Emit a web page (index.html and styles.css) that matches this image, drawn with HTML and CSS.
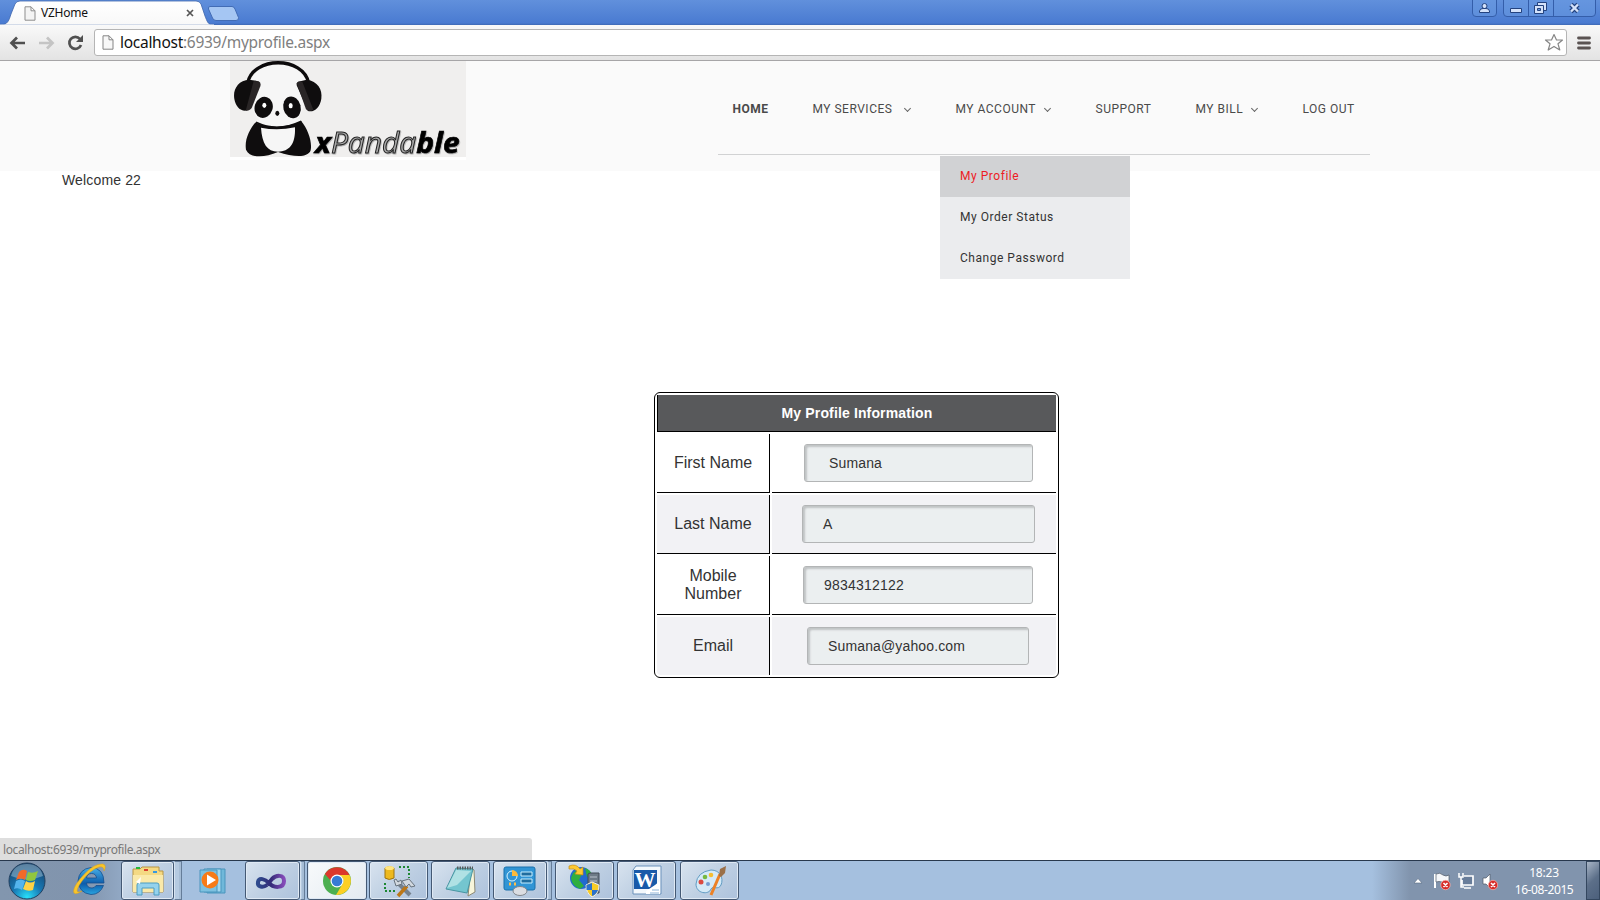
FILE: index.html
```html
<!DOCTYPE html>
<html lang="en">
<head>
<meta charset="utf-8">
<title>VZHome</title>
<link rel="stylesheet" href="styles.css">
</head>
<body>
<div class="screen">
  <div class="tabstrip">
    <div class="tab">
      <svg class="tab-shape" width="214" height="25" viewBox="0 0 214 25"><defs><linearGradient id="tg" x2="0" y2="1"><stop stop-color="#fff"/><stop offset="1" stop-color="#f8f8f8"/></linearGradient></defs><path d="M0 25C8 25 9 20 11 14L15 4Q16.500 1 20 1H196Q199.500 1 201 4L205 16C207 21 208 25 213 25Z" fill="url(#tg)" stroke="#3c64ac" stroke-width=".8"/><path d="M0 25H214" stroke="#f8f8f8" stroke-width="1"/></svg>
      <svg class="page-icon" width="12" height="15" viewBox="0 0 12 15"><path d="M1 .8H7L11 4.800V14.200H1ZM7 .8V4.800H11" fill="#f4f4f4" stroke="#8d8d8d"/></svg>
      <span class="tab-title">VZHome</span>
      <svg class="tab-close" width="8" height="8" viewBox="0 0 8 8"><path d="M1 1L7 7M7 1L1 7" stroke="#555" stroke-width="1.700"/></svg>
    </div>
    <svg class="new-tab" width="34" height="18" viewBox="0 0 34 18"><path d="M3 1.500H25Q27 1.500 28 4L31.500 12.500Q32 15.500 29 15.500H9Q6.500 15.500 5.500 13L1.500 4Q1 1.500 3 1.500Z" fill="#a5c6f3" stroke="#426cb5"/></svg>
    <svg class="win-controls" width="128" height="18" viewBox="0 0 128 18">
      <g fill="#6a9ae2" fill-opacity=".55" stroke="#345eaa"><path d="M.5 0V13Q.5 16.500 4 16.500H21Q24.500 16.500 24.500 13V0"/><path d="M31.500 0V13Q31.500 16.500 35 16.500H120Q123.500 16.500 123.500 13V0M56.500 0V16M81.500 0V16"/></g>
      <g fill="#d4e2fa" stroke="#24437f"><circle cx="12.500" cy="6" r="2.500"/><path d="M7.500 12.500V11Q8 8.500 11 8.500H14Q17 8.500 17.500 11V12.500Z"/><path d="M38.500 8.500H49.500V12.500H38.500Z"/><path d="M65.500 2.500H74.500V10.500H65.500Z"/><path d="M62.500 5.500H71.500V13.500H62.500Z"/><path d="M65.500 8.500H68.500V10.500H65.500Z" fill="#6a9ae2"/></g>
      <path d="M99 4.500L106 11.500M106 4.500L99 11.500" stroke="#24437f" stroke-width="4.600"/><path d="M99 4.500L106 11.500M106 4.500L99 11.500" stroke="#d4e2fa" stroke-width="2.400"/>
    </svg>
  </div>
  <div class="toolbar">
    <svg class="nav-icons" width="76" height="18" viewBox="0 0 76 18">
      <path d="M16 9H3M8 3.500L2.500 9L8 14.500" fill="none" stroke="#505050" stroke-width="2.700"/>
      <path d="M30 9H43M38 3.500L43.500 9L38 14.500" fill="none" stroke="#c4c4c4" stroke-width="2.700"/>
      <path d="M71 5A6 6 0 1 0 72 11" fill="none" stroke="#505050" stroke-width="2.700"/><path d="M67 8H74V1Z" fill="#505050"/>
    </svg>
    <div class="omnibox">
      <svg width="12" height="15" viewBox="0 0 12 15"><path d="M1 .8H7L11 4.800V14.200H1ZM7 .8V4.800H11" fill="#f8f8f8" stroke="#858585"/></svg>
      <span class="url"><b>localhost</b>:6939/myprofile.aspx</span>
      <svg class="star" width="20" height="19" viewBox="0 0 20 19"><path d="M10 1.500L12.500 7H18.500L14 10.800L15.800 17L10 13.400L4.200 17L6 10.800L1.500 7H7.500Z" fill="#fff" stroke="#858585" stroke-width="1.200" stroke-linejoin="round"/></svg>
    </div>
    <svg class="menu-icon" width="14" height="14" viewBox="0 0 14 14"><path d="M1.500 2H12.500M1.500 7H12.500M1.500 12H12.500" stroke="#5a5352" stroke-width="2.800" stroke-linecap="round"/></svg>
  </div>

  <main class="page">
    <header class="site-header">
      <svg class="logo" width="236" height="99" viewBox="30 18 708 297">
        <path fill="#f0efee" d="M30 18H738V306H30Z"/><path fill="#fff" d="M30 306H738V315H30Z"/>
        <path d="M92 82C110 10 240 10 259 82" fill="#f6f6f6"/>
        <path d="M92 78Q80 210 170 218Q262 220 258 78Z" fill="#f6f6f6"/>
        <path d="M83 84C99 3 250 3 266 84" fill="none" stroke="#0c0a0b" stroke-width="10"/>
        <path d="M88 74C54 76 38 103 43 132C47 157 64 171 82 166L119 92Q120 78 108 77Z" fill="#0f0d0e"/>
        <path d="M260 74C293 78 308 103 304 131C300 158 282 173 264 168L230 91Q228 80 241 79Z" fill="#0f0d0e"/>
        <path d="M101 78L116 79Q124 83 121 94L96 157Q91 168 77 167Z" fill="#292526"/><path d="M230 85Q235 78 247 80L280 164Q267 173 258 163Z" fill="#292526"/>
        <ellipse cx="131" cy="157" rx="27" ry="32" transform="rotate(18 131 157)" fill="#0f0d0e"/><ellipse cx="216" cy="157" rx="26" ry="33" transform="rotate(-14 216 157)" fill="#0f0d0e"/>
        <ellipse cx="133" cy="151" rx="6" ry="8" fill="#fff"/><ellipse cx="212" cy="152" rx="6" ry="8" fill="#fff"/><ellipse cx="172" cy="175" rx="6" ry="8" fill="#0f0d0e"/>
        <path d="M108 200Q172 228 243 197C265 224 277 261 272 286C264 310 220 306 174 291C133 309 89 310 78 284C73 255 88 222 108 200Z" fill="#0f0d0e"/>
        <path d="M104 202Q172 230 244 199L239 191Q172 222 111 195Z" fill="#f6f6f6"/>
        <path d="M108 202Q172 233 244 199" fill="none" stroke="#0f0d0e" stroke-width="5"/>
        <path d="M123 218Q172 228 225 217C227 268 208 290 174 290C141 290 126 265 123 218Z" fill="#f6f6f6"/>
        <text class="logo-word" x="285" y="293" textLength="434" lengthAdjust="spacingAndGlyphs"><tspan class="heavy">x</tspan><tspan class="outline">Panda</tspan><tspan class="heavy">ble</tspan></text>
      </svg>
      <nav class="main-nav">
        <span class="n1">HOME</span>
        <span class="n2">MY SERVICES</span><i class="chev c2"></i>
        <span class="n3">MY ACCOUNT</span><i class="chev c3"></i>
        <span class="n4">SUPPORT</span>
        <span class="n5">MY BILL</span><i class="chev c5"></i>
        <span class="n6">LOG OUT</span>
      </nav>
      <div class="dropdown"><div class="current">My Profile</div><div>My Order Status</div><div>Change Password</div></div>
    </header>
    <div class="welcome">Welcome 22</div>
    <table class="profile">
      <colgroup><col class="label-col"><col></colgroup>
      <tr><th colspan="2">My Profile Information</th></tr>
      <tr><td class="label">First Name</td><td><div class="field first">Sumana</div></td></tr>
      <tr class="alt"><td class="label">Last Name</td><td><div class="field last">A</div></td></tr>
      <tr><td class="label">Mobile Number</td><td><div class="field mobile">9834312122</div></td></tr>
      <tr class="alt final"><td class="label">Email</td><td><div class="field email">Sumana@yahoo.com</div></td></tr>
    </table>
    <div class="status">localhost:6939/myprofile.aspx</div>
  </main>

  <footer class="taskbar">
    <svg class="start" width="40" height="40" viewBox="0 0 40 40"><defs><radialGradient id="orb" cx=".5" cy=".95" r=".9"><stop stop-color="#28e0fa"/><stop offset=".45" stop-color="#1879b5"/><stop offset="1" stop-color="#164570"/></radialGradient></defs><circle cx="20" cy="20" r="18" fill="url(#orb)" stroke="#23405f"/><path d="M4 15Q7 3 20 3T36 15Q20 22 4 15Z" fill="#c7e0ee" opacity=".4"/><path d="M12 11Q16 7 20 10L18 19Q14 16 9 19Z" fill="#f26a2a"/><path d="M21 11Q26 13 31 10L28 19Q23 21 19 19Z" fill="#91c73e"/><path d="M9 20Q14 17 18 20L15 29Q11 26 7 28Z" fill="#54b4ed"/><path d="M19 20Q23 23 28 20L26 29Q21 31 16 28Z" fill="#ffd246"/></svg>
    <svg class="ie" width="34" height="34" viewBox="0 0 34 34"><defs><linearGradient id="ieg" x2="0" y2="1"><stop stop-color="#49b1e8"/><stop offset=".6" stop-color="#0c5cab"/><stop offset="1" stop-color="#2aa4df"/></linearGradient></defs><path d="M31 20H13.500Q14 25 19 25Q21.500 25 23 22.500H30.500Q27 31.500 18 31.500Q6 30 5 18Q6 6 18 4.500Q31 5 31 20ZM13.500 15H23.500Q23 10.500 18.500 10.500Q14 10.500 13.500 15Z" fill="url(#ieg)" stroke="#174f8d" stroke-width=".8"/><path d="M9 28Q3 32 1 30Q-1 26 7 16Q20 0 30 1Q34 2 31 8Q31 3 26 4Q17 7 9 18Q2 28 5 29Q7 29 9 28Z" fill="#f9c52b" stroke="#dca217" stroke-width=".5"/></svg>
    <div class="task t1"><svg width="34" height="32" viewBox="0 0 34 32"><path d="M2 4H9L11 2H28V6H32V27H2Z" fill="#f4d983" stroke="#b99644"/><path d="M2 10H32V27H2Z" fill="#fae9a9"/><path d="M5 3H9" stroke="#24b638" stroke-width="2"/><path d="M13 5H17" stroke="#d84030" stroke-width="2"/><path d="M22 7H26" stroke="#3798df" stroke-width="2"/><path d="M6 30V20Q6 18 8 18H26Q28 18 28 20V30H23V23H11V30Z" fill="#94d2ed" stroke="#4c9cc1"/><path d="M5 17L10 12L9 19Z" fill="#fff"/></svg></div><div class="stack s1"></div>
    <svg class="wmp" width="30" height="28" viewBox="0 0 30 28"><path d="M8 2H26V26H8Z" fill="#70b8da" stroke="#4a95bd"/><path d="M5 2H22V25H5Z" fill="#a3d8ef" stroke="#4a95bd"/><path d="M1 3H18V25H1Z" fill="#7dc1e0" stroke="#4a95bd"/><circle cx="11" cy="13" r="8.500" fill="#f77b17"/><path d="M8 7.500L17 13L8 18.500Z" fill="#fff"/></svg>
    <div class="task t2"><svg width="34" height="22" viewBox="0 0 34 22"><defs><linearGradient id="vs"><stop stop-color="#2e4b8e"/><stop offset=".5" stop-color="#332b78"/><stop offset="1" stop-color="#854bb8"/></linearGradient></defs><path d="M13 15C9 18 3 17 4 12C5 7 11 9 15 13C19 18 30 19 30 11C30 4 22 5 18 9L13 15" fill="none" stroke="url(#vs)" stroke-width="4"/></svg></div><div class="stack s2"></div>
    <div class="task chrome"><svg width="30" height="30" viewBox="0 0 30 30"><circle cx="15" cy="15" r="14" fill="#4caf50"/><path d="M2.900 8A14 14 0 0 1 27.500 9H15A6 6 0 0 0 9 15Z" fill="#dc382c"/><path d="M27.500 9A14 14 0 0 1 14 29L20.500 18A6 6 0 0 0 15 9Z" fill="#fdcf24"/><circle cx="15" cy="15" r="6.500" fill="#fff"/><circle cx="15" cy="15" r="5.300" fill="#367bd5"/></svg></div>
    <div class="task t4"><svg width="34" height="34" viewBox="0 0 34 34"><path d="M3 4V14Q7 17 12 14V4Q7 1 3 4Z" fill="#edb91f" stroke="#9d7411"/><ellipse cx="7.500" cy="4" rx="4.500" ry="2" fill="#ffe680"/><path d="M17 3H27V14M3 19V27H14" fill="none" stroke="#1d8732" stroke-width="2" stroke-dasharray="2 2"/><path d="M28 31L15 18" stroke="#75818d" stroke-width="4"/><path d="M16 32L25 22" stroke="#bc7717" stroke-width="3.500"/><path d="M12 16L14 22L20 20L19 16L16 18L14 15ZM20 17L27 15L33 22L29 23L27 20L24 23Z" fill="#d1d8df" stroke="#68737d"/></svg></div>
    <div class="task t5"><svg width="34" height="32" viewBox="0 0 34 32"><path d="M27 3L30 5L31 27L24 31Z" fill="#f8f6db" stroke="#8c8974"/><path d="M12 3L29 4L23 28L2 24Z" fill="#74c5cf" stroke="#4995a1"/><path d="M12 5L27 6L13 20L3 23Z" fill="#d1f0f0" opacity=".65"/><path d="M13 3H29" stroke="#545d5d" stroke-width="3" stroke-dasharray="1.500 1"/></svg></div>
    <div class="task t6"><svg width="34" height="30" viewBox="0 0 34 30"><rect x="2" y="1" width="31" height="23" rx="2" fill="#3195d5" stroke="#1a71ac"/><circle cx="10" cy="10" r="5" fill="none" stroke="#d8f4ff"/><path d="M10 10V4A6 6 0 0 1 16 10Z" fill="#fdba3a"/><path d="M19 6H30V10H19ZM19 13H30V17H19Z" fill="#1f6d9f" stroke="#c7efff"/><path d="M7 18H9M12 18H14" stroke="#ffbe4a" stroke-width="3"/><ellipse cx="18" cy="25" rx="7" ry="4.500" fill="#dbdde2" stroke="#80858b"/></svg></div><div class="stack s6"></div>
    <div class="task t7"><svg width="34" height="34" viewBox="0 0 34 34"><circle cx="13" cy="14" r="11" fill="#226ad0"/><path d="M5 9Q10 4 14 10L11 16L16 22L12 25Q4 22 3 14ZM17 4Q23 6 24 11L19 13Z" fill="#2fae40"/><path d="M20 10L22 9H31V29H20Z" fill="#6e7b87" stroke="#414b56"/><path d="M22 13H29M22 17H29" stroke="#b9c2cb"/><path d="M1 2Q8 -1 12 5L15 3L15 11L7 10L9 7Q6 4 1 5Z" fill="#ffc930" stroke="#c58d15" stroke-width=".7"/><path d="M18 21L24 18L31 21Q31 30 24 33Q18 29 18 21Z" fill="#f7cc26" stroke="#eee" /><path d="M24 19V26H18.500V21ZM24 26H30Q28 31 24 32Z" fill="#2b72cd"/></svg></div>
    <div class="task t8"><svg width="32" height="32" viewBox="0 0 32 32"><path d="M5 1H30V29H2V5Z" fill="#f3f8fc" stroke="#6a91bb"/><path d="M3 5H26V24H3Z" fill="#195aa9"/><text class="word-letter" x="14" y="22" text-anchor="middle">W</text><path d="M15 26L24 20L29 16V29H15Z" fill="#fff"/><path d="M21 25H28M19 28H28" stroke="#8eb3d6"/></svg></div>
    <div class="task t9"><svg width="34" height="34" viewBox="0 0 34 34"><path d="M18 6C27 6 31 14 28 21C25 27 20 21 18 25C16 31 3 30 3 20Q4 8 18 6Z" fill="#d5eaf7" stroke="#609bc2"/><circle cx="8" cy="18" r="2.500" fill="#db4a40"/><circle cx="12" cy="13" r="2.300" fill="#76b940"/><circle cx="18" cy="11" r="2.300" fill="#f5bd31"/><circle cx="15" cy="20" r="2" fill="#759ed2"/><path d="M18 31L27 10" stroke="#ec8125" stroke-width="3"/><path d="M26 12L27 5L33 2L32 9L28 13Z" fill="#9b7048"/></svg></div>
    <div class="tray">
      <svg width="84" height="20" viewBox="0 0 84 20"><path d="M0 12L4 7.500L8 12Z" fill="#fff" stroke="#596b84" stroke-width=".6"/><path d="M21 3V17" stroke="#fff" stroke-width="2"/><path d="M22 3Q26 1 29 4Q32 6 35 4V12Q31 13 28 11Q25 10 22 11Z" fill="#f5f7fa" stroke="#4f5967" stroke-width=".7"/><path d="M50 5H59V14H48V9" fill="#687d9a" stroke="#fff" stroke-width="1.700"/><path d="M45 2V6H49V2M47 6V16H50M50 17H57" fill="none" stroke="#fff" stroke-width="1.500"/><path d="M69 7H72L76 3V17L72 13H69Z" fill="#fff" stroke="#4f5967" stroke-width=".7"/><g fill="#d62d29" stroke="#ffb5ad" stroke-width=".7"><circle cx="31.500" cy="14" r="4.700"/><circle cx="79" cy="14" r="4.700"/></g><path d="M29.500 12L33.500 16M33.500 12L29.500 16M77 12L81 16M81 12L77 16" stroke="#fff" stroke-width="1.600"/></svg>
      <div class="clock"><span>18:23</span><span class="date">16-08-2015</span></div>
      <div class="peek"></div>
    </div>
  </footer>
</div>
</body>
</html>
```

FILE: styles.css
```css
* { box-sizing: border-box; }
body { margin: 0; background: #fff; color: #333; font-family: "Liberation Sans", Arial, sans-serif; }
svg { display: block; flex: none; }
.screen { width: 1600px; height: 900px; display: flex; flex-direction: column; overflow: hidden; }

.tabstrip { height: 25px; flex: none; display: flex; background: linear-gradient(#6190dc, #4a7bd1 92%, #3e69b4); }
.tab { position: relative; width: 207px; height: 25px; display: flex; align-items: center; padding: 1px 13px 0 24px; }
.tab-shape { position: absolute; left: 0; top: 0; }
.page-icon, .tab-title, .tab-close { position: relative; }
.tab-title { font: 12px/15px "Noto Sans", sans-serif; letter-spacing: -.25px; color: #111; margin-left: 5px; padding-bottom: 1px; flex: 1; }
.new-tab { margin: 5px 0 0 0; }
.win-controls { margin-left: auto; }
.toolbar { height: 36px; flex: none; display: flex; align-items: center; padding: 0 9px 0 9px; background: linear-gradient(#f9f9f9, #e3e3e3); border-bottom: 1px solid #a6a5a7; }
.nav-icons { margin-right: 9px; }
.omnibox { width: 1474px; height: 27px; display: flex; align-items: center; background: #fff; border: 1px solid #b5b5b5; border-radius: 3px; padding: 0 2px 0 7px; }
.url { flex: 1; margin-left: 6px; padding-bottom: 1px; font: 15.500px/22px "Noto Sans", sans-serif; letter-spacing: -.28px; color: #808080; }
.url b { font-weight: 400; color: #111; }
.menu-icon { margin-left: 10px; }

.page { height: 799px; flex: none; display: flex; flex-direction: column; }
.site-header { height: 110px; flex: none; position: relative; display: flex; align-items: flex-start; background: #fafafa; padding-left: 230px; }
.logo { overflow: visible; }
.logo-word { font: italic 86px "Open Sans", sans-serif; filter: drop-shadow(2px 3px 2px #aaa); }
.heavy { font-weight: 700; fill: #000; stroke: #000; stroke-width: 2px; }
.outline { font-weight: 400; fill: #aaa; stroke: #252525; stroke-width: 3px; }
.main-nav { margin-left: 252px; width: 652px; height: 94px; display: flex; align-items: center; padding: 3px 0 0 14.500px; border-bottom: 1px solid #d1d2d3; font: 12px/16px Roboto, sans-serif; color: #4a4a4a; letter-spacing: .5px; white-space: nowrap; }
.n1 { width: 80px; font-weight: 700; }
.n2 { width: 92px; }
.n3 { width: 89px; }
.n4 { width: 100px; }
.n5 { width: 56px; }
.chev { width: 5px; height: 5px; border: solid #666; border-width: 0 1px 1px 0; transform: translateY(-1px) rotate(45deg); }
.c2 { margin-right: 46px; }
.c3 { margin-right: 46px; }
.c5 { margin-right: 46px; }
.dropdown { position: absolute; left: 940px; top: 95px; width: 190px; background: #ebecee; font: 12px/41px Roboto, sans-serif; letter-spacing: .53px; z-index: 1; }
.dropdown div { height: 41px; padding-left: 20px; }
.dropdown .current { background: #d1d2d4; color: #ed1c24; }
.welcome { margin: 0 0 0 62px; height: 221px; font-size: 14px; line-height: 18px; letter-spacing: .15px; }

.profile { width: 405px; height: 286px; margin-left: 654px; border: 1px solid #000; border-radius: 6px; border-collapse: separate; border-spacing: 2px; table-layout: fixed; }
.label-col { width: 113px; }
.profile th { height: 37px; padding: 0; background: #58595b; color: #fff; border-left: 1px solid #000; border-bottom: 1px solid #000; font-size: 14px; letter-spacing: .14px; }
.profile td { height: 59px; padding: 0; border-bottom: 1px solid #000; }
.profile .label { padding: 0 16px; border-right: 1px solid #000; text-align: center; font-size: 16px; line-height: 18px; }
.alt td { background: #f2f2f5; }
.profile .final td { height: 58px; border-bottom: 0; }
.final td:first-child { border-bottom-left-radius: 4px; }
.final td:last-child { border-bottom-right-radius: 4px; }
.field { height: 38px; line-height: 37px; border: 1px solid #b3b5b6; border-radius: 3px; background: #ebeff0; box-shadow: inset 2px 2px 2px #c0c3c4; font-size: 14px; color: #333; }
.first { width: 229px; margin-left: 32px; padding-left: 24px; letter-spacing: .15px; }
.last { width: 233px; margin-left: 30px; padding-left: 20px; }
.mobile { width: 230px; margin-left: 31px; padding-left: 20px; letter-spacing: .2px; }
.email { width: 222px; margin-left: 35px; padding-left: 20px; letter-spacing: .14px; }
.status { margin-top: auto; width: 532px; height: 22px; flex: none; background: #dedede; border-top-right-radius: 3px; color: #777; font: 12px/23px "Noto Sans", sans-serif; letter-spacing: -.4px; padding-left: 3px; }

.taskbar { height: 40px; flex: none; display: flex; align-items: flex-start; border-top: 1px solid #28384d; background: linear-gradient(90deg, #8296ae 0, #8194ad 85px, #a5c0df 165px, #a5c0df 1372px, #8194ad 1410px, #8194ad); }
.start { margin-left: 7px; }
.ie { margin: 2px 0 0 26px; }
.task { height: 39px; width: 59px; display: flex; align-items: center; justify-content: center; border: 1px solid #445974; border-radius: 3px; background: linear-gradient(135deg, #d8e3ef, #bfd0e3 50%, #adc2dc); box-shadow: inset 0 0 0 1px #dfe9f4; }
.stack { height: 39px; border: 1px solid #657d99; border-left-color: #d6e3f1; background: #b5cae1; box-shadow: inset -2px 0 #a5bcd5; }
.t1 { width: 53px; margin-left: 14px; }
.s1 { width: 8px; }
.wmp { margin: 6px 0 0 17px; }
.t2 { width: 55px; margin-left: 16px; padding-right: 4px; }
.s2 { width: 5px; }
.chrome { margin-left: 2px; width: 60px; background: linear-gradient(135deg, #f8fafb, #e3eaf1); }
.t4, .t5, .t6 { margin-left: 3px; }
.chrome + .t4 { margin-left: 2px; }
.t6 { width: 54px; padding-right: 2px; }
.s6 { width: 5px; }
.t7 { margin-left: 3px; }
.t8, .t9 { margin-left: 3px; }
.t9 { margin-left: 4px; }
.word-letter { font: bold 21px "Liberation Serif", serif; fill: #fff; }
.tray { margin-left: auto; display: flex; height: 39px; align-items: center; }
.clock { width: 84px; height: 39px; margin-left: 4px; display: flex; flex-direction: column; align-items: center; color: #fff; font: 12px/17px "Noto Sans", sans-serif; letter-spacing: -.2px; padding-top: 3px; }
.date { letter-spacing: -.4px; }
.peek { width: 14px; height: 39px; border: 1px solid #34475f; background: linear-gradient(135deg, #a8b5c6, #5c6f89 50%, #4c607c); }
```
